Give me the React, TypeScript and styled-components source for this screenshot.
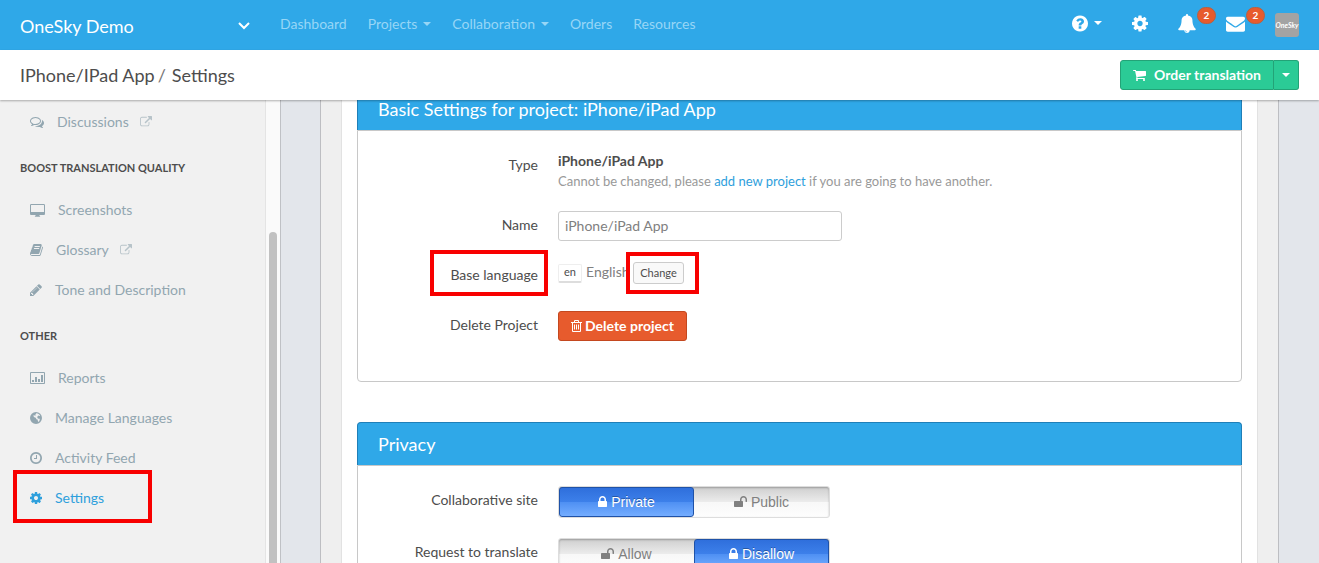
import React from "react";
import styled, { createGlobalStyle, css } from "styled-components";

const GlobalStyle = createGlobalStyle`
  *, *::before, *::after { box-sizing: border-box; }
  html, body { margin: 0; }
  body {
    font-family: Lato, "Liberation Sans", sans-serif;
    font-size: 14px;
    line-height: 20px;
    color: #4d4d4d;
    background: #f1f1f1;
    overflow: hidden;
  }
  a { color: inherit; text-decoration: none; }
  button, input { font: inherit; margin: 0; }
  button { cursor: pointer; }
  h1, h2, h3, ul, p { margin: 0; padding: 0; font-weight: 400; }
  ul { list-style: none; }
`;

/* ---------- icons ---------- */

/* Each glyph: left edge and width on a 1792-unit em, then its outline. */
const glyphs = {
  cog: [128, 1536, "M1152 896q0-106-75-181t-181-75-181 75-75 181 75 181 181 75 181-75 75-181zm512-109v222q0 12-8 23t-20 13l-185 28q-19 54-39 91 35 50 107 138 10 12 10 25t-9 23q-27 37-99 108t-94 71q-12 0-26-9l-138-108q-44 23-91 38-16 136-29 186-7 28-36 28h-222q-14 0-24.5-8.5t-11.5-21.5l-28-184q-49-16-90-37l-141 107q-10 9-25 9-14 0-25-11-126-114-165-168-7-10-7-23 0-12 8-23 15-21 51-66.5t54-70.5q-27-50-41-99l-183-27q-13-2-21-12.5t-8-23.5v-222q0-12 8-23t19-13l186-28q14-46 39-92-40-57-107-138-10-12-10-24 0-10 9-23 26-36 98.5-107.5t94.5-71.5q13 0 26 10l138 107q44-23 91-38 16-136 29-186 7-28 36-28h222q14 0 24.5 8.5t11.5 21.5l28 184q49 16 90 37l142-107q9-9 24-9 13 0 25 10 129 119 165 170 7 8 7 22 0 12-8 23-15 21-51 66.5t-54 70.5q26 50 41 98l183 28q13 2 21 12.5t8 23.5z"],
  help: [128, 1536, "M1024 1376v-192q0-14-9-23t-23-9h-192q-14 0-23 9t-9 23v192q0 14 9 23t23 9h192q14 0 23-9t9-23zm256-672q0-88-55.5-163t-138.5-116-170-41q-243 0-371 213-15 24 8 42l132 100q7 6 19 6 16 0 25-12 53-68 86-92 34-24 86-24 48 0 85.5 26t37.5 59q0 38-20 61t-68 45q-63 28-115.5 86.5t-52.5 125.5v36q0 14 9 23t23 9h192q14 0 23-9t9-23q0-19 21.5-49.5t54.5-49.5q32-18 49-28.5t46-35 44.5-48 28-60.5 12.5-81zm384 192q0 209-103 385.5t-279.5 279.5-385.5 103-385.5-103-279.5-279.5-103-385.5 103-385.5 279.5-279.5 385.5-103 385.5 103 279.5 279.5 103 385.5z"],
  bell: [64, 1664, "M912 1696q0-16-16-16-59 0-101.5-42.5t-42.5-101.5q0-16-16-16t-16 16q0 73 51.5 124.5t124.5 51.5q16 0 16-16zm816-288q0 52-38 90t-90 38h-448q0 106-75 181t-181 75-181-75-75-181h-448q-52 0-90-38t-38-90q50-42 91-88t85-119.5 74.5-158.5 50-206 19.5-260q0-152 117-282.5t307-158.5q-8-19-8-39 0-40 28-68t68-28 68 28 28 68q0 20-8 39 190 28 307 158.5t117 282.5q0 139 19.5 260t50 206 74.5 158.5 85 119.5 91 88z"],
  envelope: [0, 1792, "M1792 710v794q0 66-47 113t-113 47h-1472q-66 0-113-47t-47-113v-794q44 49 101 87 362 246 497 345 57 42 92.5 65.5t94.5 48 110 24.5h2q51 0 110-24.5t94.5-48 92.5-65.5q170-123 498-345 57-39 100-87zm0-294q0 79-49 151t-122 123q-376 261-468 325-10 7-42.5 31t-54 38.5-52 32.5-57.5 27-50 9h-2q-23 0-50-9t-57.5-27-52-32.5-54-38.5-42.5-31q-91-64-262-182.5t-205-142.5q-62-42-117-115.5t-55-136.5q0-78 41.5-130t118.5-52h1472q65 0 112.5 47t47.5 113z"],
  cart: [64, 1664, "M704 1536q0 52-38 90t-90 38-90-38-38-90 38-90 90-38 90 38 38 90zm896 0q0 52-38 90t-90 38-90-38-38-90 38-90 90-38 90 38 38 90zm128-1088v512q0 24-16.5 42.5t-40.5 21.5l-1044 122q13 60 13 70 0 16-24 64h920q26 0 45 19t19 45-19 45-45 19h-1024q-26 0-45-19t-19-45q0-11 8-31.5t16-36 21.5-40 15.5-29.5l-177-823h-204q-26 0-45-19t-19-45 19-45 45-19h256q16 0 28.5 6.5t19.5 15.5 13 24.5 8 26 5.5 29.5 4.5 26h1201q26 0 45 19t19 45z"],
  comments: [0, 1792, "M704 384q-153 0-286 52t-211.5 141-78.5 191q0 82 53 158t149 132l97 56-35 84q34-20 62-39l44-31 53 10q78 14 153 14 153 0 286-52t211.5-141 78.5-191-78.5-191-211.5-141-286-52zm0-128q191 0 353.5 68.5t256.5 186.5 94 257-94 257-256.5 186.5-353.5 68.5q-86 0-176-16-124 88-278 128-36 9-86 16h-3q-11 0-20.5-8t-11.5-21q-1-3-1-6.5t.5-6.5 2-6l2.5-5 3.5-5.5 4-5 4.5-5 4-4.5q5-6 23-25t26-29.5 22.5-29 25-38.5 20.5-44q-124-72-195-177t-71-224q0-139 94-257t256.5-186.5 353.5-68.5zm822 1169q10 24 20.5 44t25 38.5 22.5 29 26 29.5 23 25q1 1 4 4.5t4.5 5 4 5 3.5 5.5l2.5 5 2 6 .5 6.5-1 6.5q-3 14-13 22t-22 7q-50-7-86-16-154-40-278-128-90 16-176 16-271 0-472-132 58 4 88 4 161 0 309-45t264-129q125-92 192-212t67-254q0-77-23-152 129 71 204 178t75 230q0 120-71 224.5t-195 176.5z"],
  external: [0, 1792, "M1408 928v320q0 119-84.5 203.5t-203.5 84.5h-832q-119 0-203.5-84.5t-84.5-203.5v-832q0-119 84.5-203.5t203.5-84.5h704q14 0 23 9t9 23v64q0 14-9 23t-23 9h-704q-66 0-113 47t-47 113v832q0 66 47 113t113 47h832q66 0 113-47t47-113v-320q0-14 9-23t23-9h64q14 0 23 9t9 23zm384-864v512q0 26-19 45t-45 19-45-19l-176-176-652 652q-10 10-23 10t-23-10l-114-114q-10-10-10-23t10-23l652-652-176-176q-19-19-19-45t19-45 45-19h512q26 0 45 19t19 45z"],
  book: [64, 1664, "M1703 478q40 57 18 129l-275 906q-19 64-76.5 107.5t-122.5 43.5h-923q-77 0-148.5-53.5t-99.5-131.5q-24-67-2-127 0-4 3-27t4-37q1-8-3-21.5t-3-19.5q2-11 8-21t16.5-23.5 16.5-23.5q23-38 45-91.5t30-91.5q3-10 .5-30t-.5-28q3-11 17-28t17-23q21-36 42-92t25-90q1-9-2.5-32t.5-28q4-13 22-30.5t22-22.5q19-26 42.5-84.5t27.5-96.5q1-8-3-25.5t-2-26.5q2-8 9-18t18-23 17-21q8-12 16.5-30.5t15-35 16-36 19.5-32 26.5-23.5 36-11.5 47.5 5.5l-1 3q38-9 51-9h761q74 0 114 56t18 130l-274 906q-36 119-71.5 153.5t-128.5 34.5h-869q-27 0-38 15-11 16-1 43 24 70 144 70h923q29 0 56-15.5t35-41.5l300-987q7-22 5-57 38 15 59 43zm-1064 2q-4 13 2 22.5t20 9.5h608q13 0 25.5-9.5t16.5-22.5l21-64q4-13-2-22.5t-20-9.5h-608q-13 0-25.5 9.5t-16.5 22.5zm-83 256q-4 13 2 22.5t20 9.5h608q13 0 25.5-9.5t16.5-22.5l21-64q4-13-2-22.5t-20-9.5h-608q-13 0-25.5 9.5t-16.5 22.5z"],
  pencil: [128, 1536, "M491 1536l91-91-235-235-91 91v107h128v128h107zm523-928q0-22-22-22-10 0-17 7l-542 542q-7 7-7 17 0 22 22 22 10 0 17-7l542-542q7-7 7-17zm-54-192l416 416-832 832h-416v-416zm683 96q0 53-37 90l-166 166-416-416 166-165q36-38 90-38 53 0 91 38l235 234q37 39 37 91z"],
  clock: [128, 1536, "M1024 544v448q0 14-9 23t-23 9h-320q-14 0-23-9t-9-23v-64q0-14 9-23t23-9h224v-352q0-14 9-23t23-9h64q14 0 23 9t9 23zm416 352q0-148-73-273t-198-198-273-73-273 73-198 198-73 273 73 273 198 198 273 73 273-73 198-198 73-273zm224 0q0 209-103 385.5t-279.5 279.5-385.5 103-385.5-103-279.5-279.5-103-385.5 103-385.5 279.5-279.5 385.5-103 385.5 103 279.5 279.5 103 385.5z"],
  lock: [320, 1152, "M640 768h512v-192q0-106-75-181t-181-75-181 75-75 181v192zm832 96v576q0 40-28 68t-68 28h-960q-40 0-68-28t-28-68v-576q0-40 28-68t68-28h32v-192q0-184 132-316t316-132 316 132 132 316v192h32q40 0 68 28t28 68z"],
  unlock: [64, 1664, "M1728 576v256q0 26-19 45t-45 19h-64q-26 0-45-19t-19-45v-256q0-106-75-181t-181-75-181 75-75 181v192h96q40 0 68 28t28 68v576q0 40-28 68t-68 28h-960q-40 0-68-28t-28-68v-576q0-40 28-68t68-28h672v-192q0-185 131.5-316.5t316.5-131.5 316.5 131.5 131.5 316.5z"],
  desktop: [-64, 1920, "M96 128h1600q66 0 113 47t47 113v1088q0 66-47 113t-113 47h-544v96q0 32 80 64v64h-672v-64q80-32 80-64v-96h-544q-66 0-113-47t-47-113v-1088q0-66 47-113t113-47zm0 128q-32 0-32 32v832q0 32 32 32h1600q32 0 32-32v-832q0-32-32-32z"],
  chart: [-128, 1920, "M16 128h1632q60 0 102 42t42 102v1248q0 60-42 102t-102 42h-1632q-60 0-102-42t-42-102v-1248q0-60 42-102t102-42zm16 128q-32 0-32 32v1216q0 32 32 32h1600q32 0 32-32v-1216q0-32-32-32zM128 1152h256v256h-256zM512 768h256v640h-256zM896 1024h256v384h-256zM1280 512h256v896h-256z"],
  globe: [128, 1536, "M896 128a768 768 0 1 0 0 1536 768 768 0 1 0 0-1536zM940 270l300 100 190 210-90 70-130-60-110 90-40 170 110 130 150-20 60 120-60 210-130 110-70-140 20-130-190-90-90-180-180-60-150-200 130-50 130 60 70-90-60-90 120-60z"],
} as const;

type GlyphName = keyof typeof glyphs;

const Svg = styled.svg`
  flex: none;
  display: block;
  fill: currentColor;
  overflow: visible;
`;

function Icon({ name, size = 14 }: { name: GlyphName; size?: number }) {
  const [left, width, outline] = glyphs[name];
  return (
    <Svg
      width={Math.round((size * width) / 1792)}
      height={size}
      viewBox={`${left} 0 ${width} 1792`}
      aria-hidden="true"
    >
      <path fillRule="evenodd" d={outline} />
    </Svg>
  );
}

function TrashIcon() {
  return (
    <Svg width="11" height="12" viewBox="0 0 11 12" aria-hidden="true">
      <path
        d="M0 2.5h11M3.5 2.5v-2h4v2M1.5 2.5v9h8v-9M3.5 4.5v5M5.5 4.5v5M7.5 4.5v5"
        fill="none"
        stroke="currentColor"
      />
    </Svg>
  );
}

const Caret = styled.span`
  width: 0;
  height: 0;
  border: 4px solid transparent;
  border-top-color: currentColor;
  border-bottom: 0;
`;

/* ---------- top bar ---------- */

const Page = styled.div`
  display: flex;
  flex-direction: column;
  height: 100vh;
`;

const TopBar = styled.header`
  flex: none;
  display: flex;
  align-items: center;
  height: 50px;
  padding: 0 20px;
  background: #2fa8e8;
  color: #fff;
`;

const TeamSwitch = styled.button`
  display: flex;
  align-items: center;
  justify-content: space-between;
  width: 230px;
  margin-right: 30px;
  padding: 2px 0 0;
  border: 0;
  background: none;
  color: #fff;
  font-size: 18px;
  line-height: 24px;
`;

const MainNav = styled.nav`
  display: flex;
  gap: 21px;
  flex: 1;
  padding-bottom: 2px;
`;

const NavLink = styled.a`
  display: flex;
  align-items: center;
  gap: 6px;
  color: #97d6f6;
`;

const Tools = styled.div`
  display: flex;
  align-items: center;
  gap: 30px;
`;

const Tool = styled.button`
  position: relative;
  display: flex;
  align-items: center;
  gap: 6px;
  padding: 0 0 4px;
  border: 0;
  background: none;
  color: #fff;
`;

const Badge = styled.span`
  position: absolute;
  top: -7px;
  right: -20px;
  width: 19px;
  height: 17px;
  border: 1px solid #b9603f;
  border-radius: 9px;
  background: #e75b2d;
  font-size: 10px;
  font-weight: 700;
  line-height: 14px;
  text-align: center;
`;

const Avatar = styled.a`
  width: 24px;
  height: 24px;
  border-radius: 3px;
  background: #a3a3a3;
  font-size: 7px;
  font-style: italic;
  font-weight: 700;
  line-height: 24px;
  text-align: center;
`;

/* ---------- title bar ---------- */

const TitleBar = styled.div`
  position: relative;
  z-index: 1;
  flex: none;
  display: flex;
  align-items: center;
  justify-content: space-between;
  height: 50px;
  padding: 0 20px;
  background: #fff;
  box-shadow: 0 1px 2px rgba(0, 0, 0, 0.3);
`;

const Crumbs = styled.h1`
  display: flex;
  gap: 3px;
  font-size: 18px;
  line-height: 24px;
`;

const Slash = styled.span`
  margin-right: 3px;
  color: #777;
`;

const ButtonGroup = styled.div`
  display: flex;
  height: 30px;
`;

const GreenButton = styled.button<{ $side: "left" | "right" }>`
  display: flex;
  align-items: center;
  gap: 8px;
  padding: 0 ${(p) => (p.$side === "left" ? 12 : 8)}px;
  border: 1px solid #23a377;
  border-radius: ${(p) => (p.$side === "left" ? "3px 0 0 3px" : "0 3px 3px 0")};
  ${(p) => p.$side === "right" && css`border-left: 0;`}
  background: #2bcb96;
  color: #fff;
  font-weight: 700;
`;

/* ---------- sidebar ---------- */

const Body = styled.div`
  flex: 1;
  display: flex;
  min-height: 0;
`;

const Sidebar = styled.nav`
  flex: none;
  width: 266px;
  padding: 2px 0 0 20px;
  border-right: 1px solid #e4e4e4;
  overflow: hidden;
`;

const Track = styled.div`
  flex: none;
  display: flex;
  justify-content: center;
  width: 14px;
  padding-top: 132px;
  background: #fafafa;
`;

const Thumb = styled.div`
  width: 8px;
  border-radius: 4px 4px 0 0;
  background: #c1c1c1;
`;

const GroupTitle = styled.h2`
  padding: 16px 0 12px;
  font-size: 11px;
  font-weight: 700;
  text-transform: uppercase;
`;

const SideLink = styled.a<{ $active?: boolean }>`
  position: relative;
  display: flex;
  align-items: center;
  height: 40px;
  padding-left: 10px;
  color: ${(p) => (p.$active ? "#2fa0dc" : "#92a6b0")};
`;

const SideLabel = styled.span`
  margin: 0 11px 0 13px;
`;

const Faded = styled.span`
  opacity: 0.6;
`;

const redFrame = css`
  border: 4px solid #f80000;
`;

const SettingsMark = styled.span`
  position: absolute;
  top: -8px;
  left: -7px;
  width: 139px;
  height: 53px;
  ${redFrame}
`;

/* ---------- settings ---------- */

const Main = styled.main`
  flex: 1;
  min-width: 0;
  display: flex;
  padding: 0 40px 0 39px;
  border-left: 1px solid #bfc1c5;
  background: #e3e6eb;
  overflow: hidden;
`;

const Frame = styled.div`
  flex: 1;
  display: flex;
  padding: 0 20px;
  border: solid #bdbec2;
  border-width: 0 1px;
  background: #efefef;
`;

const Sheet = styled.div`
  flex: 1;
  padding: 0 15px;
  border: solid #e2e2e2;
  border-width: 0 1px;
  background: #fff;
`;

const Scrolled = styled.div`
  margin-top: -13px;
`;

const Panel = styled.section`
  margin-bottom: 40px;
`;

const PanelTitle = styled.h2`
  padding: 12px 20px;
  border: 1px solid #1f7fb8;
  border-bottom: 0;
  border-radius: 4px 4px 0 0;
  background: #2fa8e8;
  color: #fff;
  font-size: 18px;
  line-height: 18px;
`;

const PanelBody = styled.div`
  padding: 20px 0;
  border: 1px solid #c8c8c8;
  border-radius: 0 0 4px 4px;
`;

const Row = styled.div`
  display: grid;
  grid-template-columns: 180px 1fr;
  column-gap: 20px;
  align-items: start;
  margin-bottom: 20px;
`;

const RowLabel = styled.label`
  position: relative;
  padding-top: 4px;
  text-align: right;
`;

const LabelMark = styled.span`
  position: absolute;
  top: -11px;
  right: -10px;
  width: 118px;
  height: 46px;
  ${redFrame}
`;

const TypeName = styled.strong`
  display: block;
`;

const Hint = styled.p`
  color: #999;
  font-size: 13px;
`;

const HintLink = styled.a`
  color: #2fa0dc;
`;

const TextInput = styled.input`
  display: block;
  width: 284px;
  height: 30px;
  padding: 0 6px 2px;
  border: 1px solid #ccc;
  border-radius: 3px;
  color: #808080;
`;

const Language = styled.div`
  position: relative;
  display: flex;
  align-items: center;
  gap: 4px;
  height: 30px;
  padding-bottom: 8px;
  color: #808080;
`;

const Code = styled.span`
  width: 24px;
  height: 19px;
  margin-top: 2px;
  border: 1px solid #eee;
  border-bottom: 2px solid #ddd;
  border-radius: 2px;
  color: #4d4d4d;
  font-size: 11px;
  line-height: 14px;
  text-align: center;
`;

const ChangeMark = styled.span`
  position: absolute;
  top: -9px;
  left: 68px;
  width: 73px;
  height: 42px;
  padding: 6px 3px;
  background: #fff;
  ${redFrame}
`;

const SmallButton = styled.button`
  display: block;
  width: 51px;
  height: 22px;
  padding: 0;
  border: 1px solid #ccc;
  border-radius: 3px;
  background: #f9f9f9;
  color: #4d4d4d;
  font-size: 11px;
  line-height: 18px;
`;

const DangerButton = styled.button`
  display: flex;
  align-items: center;
  gap: 3px;
  height: 30px;
  padding: 0 12px;
  border: 1px solid #c4481f;
  border-radius: 3px;
  background: #e75b2d;
  color: #fff;
  font-weight: 700;
`;

const Switch = styled.div`
  display: flex;
  width: 272px;
  height: 32px;
  border: 1px solid #ddd;
  border-radius: 3px;
  background: linear-gradient(#cfcfcf, #ececec 50%, #f8f8f8 51%, #fdfdfd);
  box-shadow: inset 0 1px 2px rgba(0, 0, 0, 0.25);
`;

const Choice = styled.label`
  flex: 1;
  display: flex;
  align-items: center;
  justify-content: center;
  gap: 4px;
  border: 1px solid transparent;
  border-radius: 3px;
  color: #808080;
  font-family: "Liberation Sans", Arial, sans-serif;
  cursor: pointer;

  &:has(input:checked) {
    border-color: #1f52a8;
    background: linear-gradient(#2f6fdc, #3d80ea 50%, #4f90f3 51%, #74adff);
    color: #fff;
    text-shadow: 0 -1px 0 rgba(0, 0, 0, 0.3);
  }
`;

const HiddenRadio = styled.input`
  position: absolute;
  width: 1px;
  height: 1px;
  margin: 0;
  opacity: 0;
`;

type Option = { label: string; icon: GlyphName };

function OptionSwitch({ name, options, selected }: { name: string; options: Option[]; selected: string }) {
  return (
    <Switch role="radiogroup" aria-labelledby={name + "-label"}>
      {options.map((o) => (
        <Choice key={o.label}>
          <HiddenRadio type="radio" name={name} defaultChecked={o.label === selected} />
          <Icon name={o.icon} />
          {o.label}
        </Choice>
      ))}
    </Switch>
  );
}

type SideItem = { label: string; icon: GlyphName; external?: boolean; active?: boolean };

function SideGroup({ items }: { items: SideItem[] }) {
  return (
    <ul>
      {items.map((item) => (
        <li key={item.label}>
          <SideLink href="#" $active={item.active}>
            <Icon name={item.icon} />
            <SideLabel>{item.label}</SideLabel>
            {item.external && (
              <Faded>
                <Icon name="external" size={12} />
              </Faded>
            )}
            {item.active && <SettingsMark />}
          </SideLink>
        </li>
      ))}
    </ul>
  );
}

export default function App() {
  return (
    <Page>
      <GlobalStyle />
      <TopBar>
        <TeamSwitch>
          OneSky Demo
          <svg width="12" height="8" viewBox="0 0 12 8" aria-hidden="true">
            <path d="M1 1l5 5 5-5" fill="none" stroke="currentColor" strokeWidth="2" />
          </svg>
        </TeamSwitch>
        <MainNav>
          <NavLink href="#">Dashboard</NavLink>
          <NavLink href="#">Projects <Caret /></NavLink>
          <NavLink href="#">Collaboration <Caret /></NavLink>
          <NavLink href="#">Orders</NavLink>
          <NavLink href="#">Resources</NavLink>
        </MainNav>
        <Tools>
          <Tool aria-label="Help">
            <Icon name="help" size={19} />
            <Caret />
          </Tool>
          <Tool aria-label="Preferences">
            <Icon name="cog" size={19} />
          </Tool>
          <Tool aria-label="Notifications">
            <Icon name="bell" size={19} />
            <Badge>2</Badge>
          </Tool>
          <Tool aria-label="Messages">
            <Icon name="envelope" size={19} />
            <Badge>2</Badge>
          </Tool>
          <Avatar href="#">OneSky</Avatar>
        </Tools>
      </TopBar>

      <TitleBar>
        <Crumbs>
          <a href="#">IPhone/IPad App</a>
          <Slash>/</Slash>
          <span>Settings</span>
        </Crumbs>
        <ButtonGroup>
          <GreenButton $side="left">
            <Icon name="cart" />
            Order translation
          </GreenButton>
          <GreenButton $side="right" aria-label="More order options">
            <Caret />
          </GreenButton>
        </ButtonGroup>
      </TitleBar>

      <Body>
        <Sidebar>
          <SideGroup items={[{ label: "Discussions", icon: "comments", external: true }]} />
          <GroupTitle>Boost translation quality</GroupTitle>
          <SideGroup
            items={[
              { label: "Screenshots", icon: "desktop" },
              { label: "Glossary", icon: "book", external: true },
              { label: "Tone and Description", icon: "pencil" },
            ]}
          />
          <GroupTitle>Other</GroupTitle>
          <SideGroup
            items={[
              { label: "Reports", icon: "chart" },
              { label: "Manage Languages", icon: "globe" },
              { label: "Activity Feed", icon: "clock" },
              { label: "Settings", icon: "cog", active: true },
            ]}
          />
        </Sidebar>
        <Track>
          <Thumb />
        </Track>

        <Main>
          <Frame>
            <Sheet>
              <Scrolled>
                <Panel>
                  <PanelTitle>Basic Settings for project: iPhone/iPad App</PanelTitle>
                  <PanelBody>
                    <Row>
                      <RowLabel as="span">Type</RowLabel>
                      <div>
                        <TypeName>iPhone/iPad App</TypeName>
                        <Hint>
                          Cannot be changed, please <HintLink href="#">add new project</HintLink> if you are going to
                          have another.
                        </Hint>
                      </div>
                    </Row>
                    <Row>
                      <RowLabel htmlFor="project-name">Name</RowLabel>
                      <TextInput id="project-name" type="text" defaultValue="iPhone/iPad App" />
                    </Row>
                    <Row>
                      <RowLabel as="span">
                        Base language
                        <LabelMark />
                      </RowLabel>
                      <Language>
                        <Code>en</Code>
                        English
                        <ChangeMark>
                          <SmallButton>Change</SmallButton>
                        </ChangeMark>
                      </Language>
                    </Row>
                    <Row>
                      <RowLabel as="span">Delete Project</RowLabel>
                      <div>
                        <DangerButton>
                          <TrashIcon />
                          Delete project
                        </DangerButton>
                      </div>
                    </Row>
                  </PanelBody>
                </Panel>

                <Panel>
                  <PanelTitle>Privacy</PanelTitle>
                  <PanelBody>
                    <Row>
                      <RowLabel as="span" id="site-label">Collaborative site</RowLabel>
                      <OptionSwitch
                        name="site"
                        selected="Private"
                        options={[
                          { label: "Private", icon: "lock" },
                          { label: "Public", icon: "unlock" },
                        ]}
                      />
                    </Row>
                    <Row>
                      <RowLabel as="span" id="request-label">Request to translate</RowLabel>
                      <OptionSwitch
                        name="request"
                        selected="Disallow"
                        options={[
                          { label: "Allow", icon: "unlock" },
                          { label: "Disallow", icon: "lock" },
                        ]}
                      />
                    </Row>
                  </PanelBody>
                </Panel>
              </Scrolled>
            </Sheet>
          </Frame>
        </Main>
      </Body>
    </Page>
  );
}
